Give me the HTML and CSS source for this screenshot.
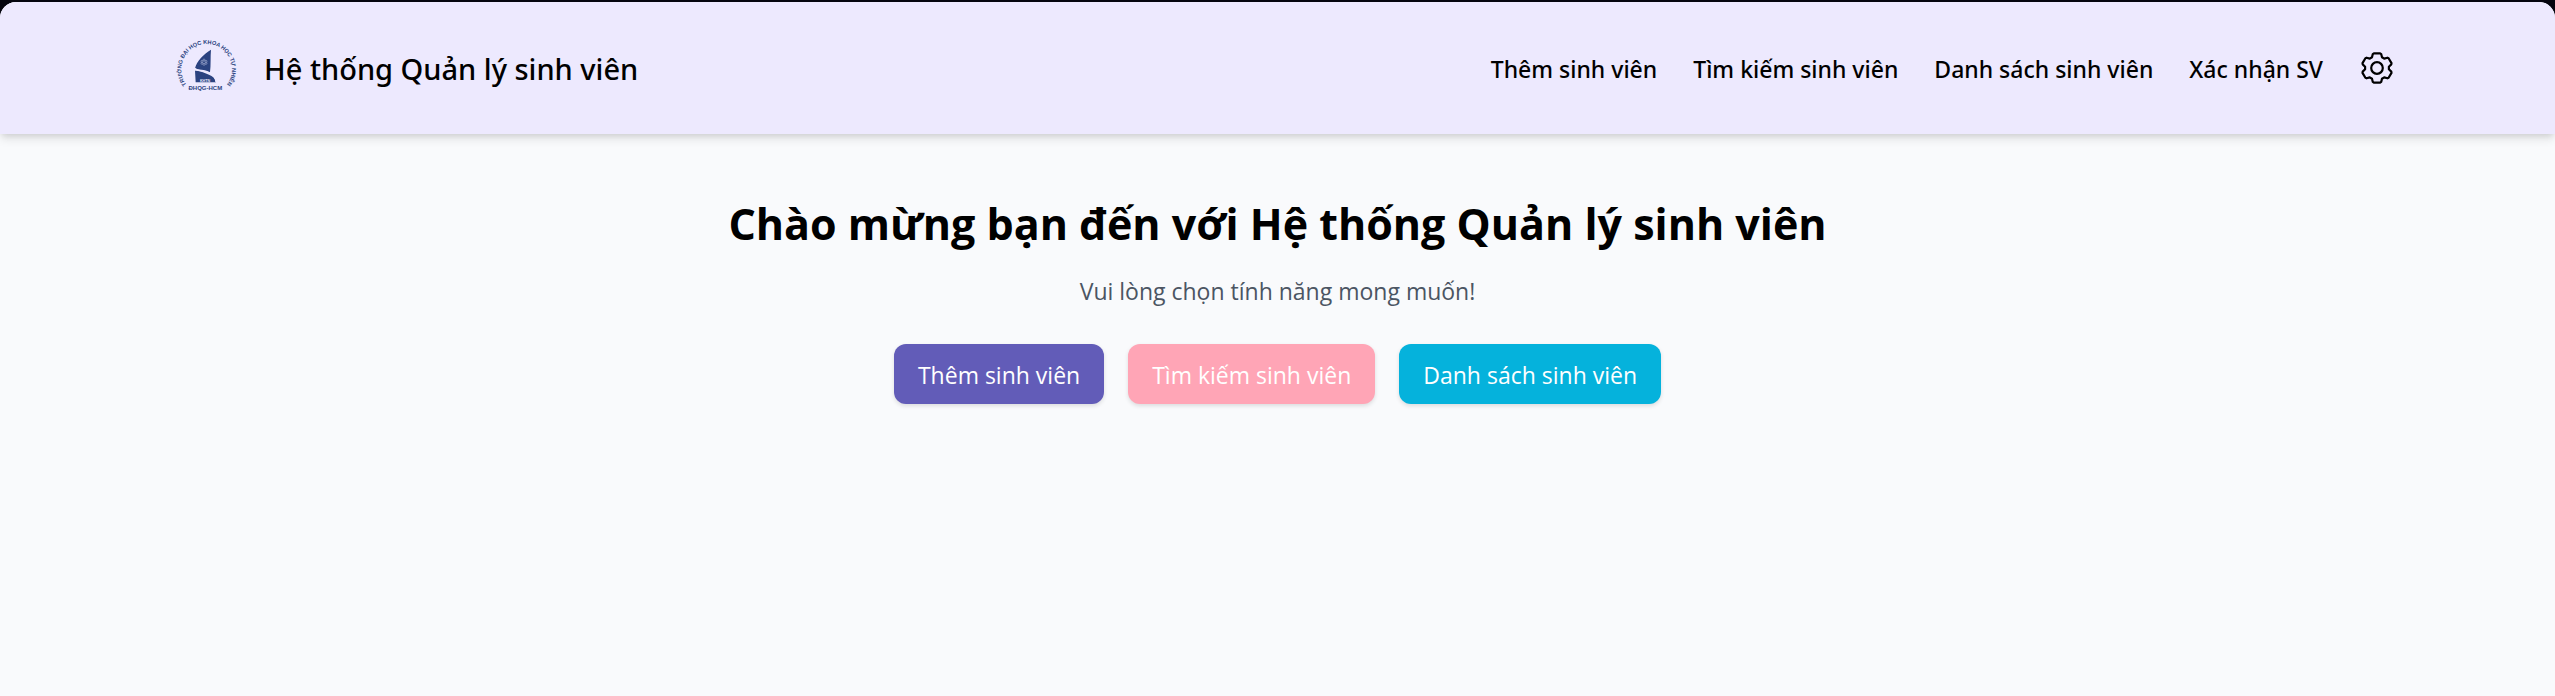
FILE: index.html
```
<!DOCTYPE html>
<html lang="vi">
<head>
<meta charset="utf-8">
<meta name="viewport" content="width=device-width, initial-scale=1">
<title>Hệ thống Quản lý sinh viên</title>
<link rel="stylesheet" href="styles.css">
</head>
<body>
<div class="frame">
  <header class="header">
    <a class="brand" href="#">
      <svg class="logo" viewBox="24 21 216 216" role="img" aria-label="Trường Đại học Khoa học Tự nhiên">
        <path id="ring" d="M91 191A76 76 0 1 1 189 191" fill="none"/>
        <text class="logo-ring"><textPath href="#ring" startOffset="50%" text-anchor="middle">TRƯỜNG ĐẠI HỌC KHOA HỌC TỰ NHIÊN</textPath></text>
        <path class="logo-fill" d="M153 74C131 88 110 108 105 130C113 136 134 132 150 142C153 119 151 96 153 74Z"/>
        <path class="logo-fill" d="M105 137C122 136 134 144 147 149C158 153 165 160 168 172H107Z"/>
        <path class="logo-wave" d="M101 127C111 141 130 134 148 144C160 149 168 160 168 171"/>
        <g class="logo-flower">
          <circle cx="132" cy="105" r="3"/><circle cx="138" cy="109" r="3"/><circle cx="138" cy="115" r="3"/>
          <circle cx="132" cy="118" r="3"/><circle cx="126" cy="115" r="3"/><circle cx="126" cy="109" r="3"/>
        </g>
        <text class="logo-mark" x="135" y="170" text-anchor="middle">KHTN</text>
        <text class="logo-name" x="136" y="194" text-anchor="middle">ĐHQG-HCM</text>
      </svg>
      <span class="brand-name">Hệ thống Quản lý sinh viên</span>
    </a>
    <nav class="nav">
      <a class="nav-link" href="#">Thêm sinh viên</a>
      <a class="nav-link" href="#">Tìm kiếm sinh viên</a>
      <a class="nav-link" href="#">Danh sách sinh viên</a>
      <a class="nav-link" href="#">Xác nhận SV</a>
      <button class="settings" type="button" aria-label="Cài đặt">
        <svg class="settings-icon" viewBox="-18 -18 36 36" aria-hidden="true">
          <path d="M-3.1-14.7H3.1L4.2-13.9 5-10.8 7.2-9.4 10.4-10.3 11.6-9.8 14.5-4.9 14.3-3.6 11.9-1.3V1.3L14.3 3.6 14.5 4.9 11.6 9.8 10.4 10.3 7.2 9.4 5 10.8 4.2 13.9 3.1 14.7H-3.1L-4.2 13.9-5 10.8-7.2 9.4-10.4 10.3-11.6 9.8-14.5 4.9-14.3 3.6-11.9 1.3V-1.3L-14.3-3.6-14.5-4.9-11.6-9.8-10.4-10.3-7.2-9.4-5-10.8-4.2-13.9Z"/>
          <circle r="5.8"/>
        </svg>
      </button>
    </nav>
  </header>
  <main class="main">
    <h1 class="title">Chào mừng bạn đến với Hệ thống Quản lý sinh viên</h1>
    <p class="lead">Vui lòng chọn tính năng mong muốn!</p>
    <div class="actions">
      <button class="action action-add" type="button">Thêm sinh viên</button>
      <button class="action action-search" type="button">Tìm kiếm sinh viên</button>
      <button class="action action-list" type="button">Danh sách sinh viên</button>
    </div>
  </main>
</div>
</body>
</html>
```
FILE: styles.css
```
* {
  box-sizing: border-box;
}

body {
  margin: 0;
  padding-top: 2px;
  background: #05050f;
  color: #000;
  font-family: "Segoe UI", "Open Sans", "Noto Sans", sans-serif;
  font-size: 23px;
  line-height: 36px;
}

.frame {
  min-height: calc(100vh - 2px);
  background: #f9fafc;
  border-radius: 16px 16px 0 0;
  overflow: hidden;
}

.header {
  display: flex;
  align-items: center;
  justify-content: space-between;
  padding: 30px 160px 30px 168px;
  background: #ede9fe;
  box-shadow: 0 6px 9px -1px rgba(0, 0, 0, 0.1), 0 3px 6px -2px rgba(0, 0, 0, 0.1);
  font-family: "Segoe UI", "Noto Sans", "Open Sans", sans-serif;
}

.brand {
  display: flex;
  align-items: center;
  gap: 24px;
  color: inherit;
  text-decoration: none;
}

.logo {
  width: 72px;
  height: 72px;
  overflow: visible;
  font-family: "Liberation Sans", Arial, sans-serif;
  font-weight: 700;
}

.logo-ring,
.logo-name,
.logo-fill {
  fill: #2b4380;
}

.logo-ring {
  font-size: 17px;
}

.logo-name {
  font-size: 18px;
}

.logo-mark {
  fill: #ede9fe;
  font-size: 11px;
}

.logo-wave {
  fill: none;
  stroke: #ede9fe;
  stroke-width: 4;
}

.logo-flower {
  fill: none;
  stroke: #9ba6cc;
  stroke-width: 2;
}

.brand-name {
  padding-top: 2px;
  font-size: 29px;
  font-weight: 500;
}

.nav {
  display: flex;
  align-items: center;
  gap: 36px;
}

.nav-link {
  padding-top: 2px;
  color: inherit;
  font-weight: 500;
  text-decoration: none;
}

.settings {
  display: flex;
  padding: 0;
  border: 0;
  background: none;
  cursor: pointer;
}

.settings-icon {
  width: 36px;
  height: 36px;
  fill: none;
  stroke: #000;
  stroke-width: 2.2;
  stroke-linejoin: round;
}

.main {
  display: flex;
  flex-direction: column;
  align-items: center;
  padding: 60px 24px;
  text-align: center;
}

.title {
  margin: 0 0 19px;
  font-size: 43px;
  font-weight: 700;
  line-height: 60px;
}

.lead {
  margin: 0 0 35px;
  color: #4b5563;
}

.actions {
  display: flex;
  flex-wrap: wrap;
  justify-content: center;
  gap: 24px;
}

.action {
  padding: 13px 24px 11px;
  border: 0;
  border-radius: 12px;
  color: #fff;
  font: inherit;
  box-shadow: 0 2px 4px rgba(0, 0, 0, 0.12);
  cursor: pointer;
}

.action-add {
  background: #625cb8;
}

.action-search {
  background: #ffa5b6;
}

.action-list {
  background: #05b2dc;
}
```
